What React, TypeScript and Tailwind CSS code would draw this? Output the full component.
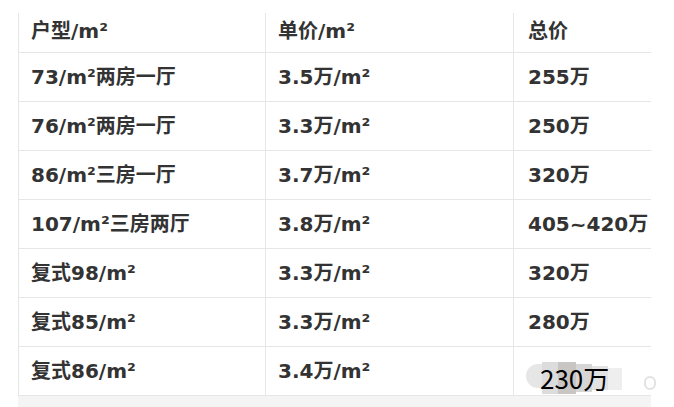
import React from "react";

const rows: [string, string, string][] = [
  ["73/m²两房一厅", "3.5万/m²", "255万"],
  ["76/m²两房一厅", "3.3万/m²", "250万"],
  ["86/m²三房一厅", "3.7万/m²", "320万"],
  ["107/m²三房两厅", "3.8万/m²", "405~420万"],
  ["复式98/m²", "3.3万/m²", "320万"],
  ["复式85/m²", "3.3万/m²", "280万"],
  ["复式86/m²", "3.4万/m²", ""],
];

function Cell({ children, h, pl }: { children?: React.ReactNode; h: string; pl: string }) {
  return (
    <div className={`${h} ${pl} border-l border-b border-[#e6e6e6] flex items-center whitespace-nowrap`}>
      {children}
    </div>
  );
}

function Mosaic() {
  return (
    <div className="absolute left-[508px] top-[349px] flex items-start">
      <div className="w-[16px] h-[24px] mt-[2px] bg-[#e6e6e6] rounded-l-full" />
      <div className="w-[16px] h-[32px] bg-[#dcdcdc]" />
      <div className="w-[18px] h-[32px] bg-[#c8c5c3]" />
      <div className="w-[16px] h-[28px] mt-[2px] bg-[#d6d6d6]" />
      <div className="w-[16px] h-[24px] mt-[4px] bg-[#e2e2e2]" />
      <div className="w-[14px] h-[22px] mt-[6px] bg-[#eeeeee]" />
      <div
        className="absolute left-[14px] top-[1px] text-black font-normal text-[26px] leading-[30px]"
        style={{ fontFamily: '"Noto Sans CJK SC", sans-serif' }}
      >
        230万
      </div>
      <div className="ml-[22px] mt-[14px] w-[12px] h-[14px] rounded-full border-2 border-[#e2e2e2]" />
    </div>
  );
}

export default function App() {
  return (
    <div
      className="w-[674px] h-[407px] bg-white overflow-hidden pl-[18px] pt-[13px] text-[#333333] font-bold text-[20px]"
      style={{ fontFamily: '"DejaVu Sans", "Noto Sans CJK SC", sans-serif' }}
    >
      <div className="relative w-[633px]">
        <div className="grid grid-cols-[247px_248px_138px]">
          <Cell h="h-[40px] pb-[3px]" pl="pl-3">户型/m²</Cell>
          <Cell h="h-[40px] pb-[3px]" pl="pl-3">单价/m²</Cell>
          <Cell h="h-[40px] pb-[3px]" pl="pl-[14px]">总价</Cell>
          {rows.map((r, i) => (
            <React.Fragment key={i}>
              <Cell h="h-[49px]" pl="pl-3">{r[0]}</Cell>
              <Cell h="h-[49px]" pl="pl-3">{r[1]}</Cell>
              <Cell h="h-[49px]" pl="pl-[14px]">{r[2]}</Cell>
            </React.Fragment>
          ))}
        </div>
        <div className="h-[12px] bg-[#f4f4f4]" />
        <Mosaic />
      </div>
    </div>
  );
}
